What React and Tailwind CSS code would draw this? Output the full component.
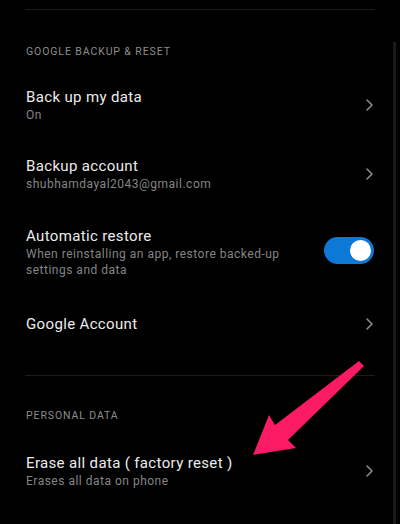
const Chevron = () => (
    <svg width="9" height="14" viewBox="0 0 9 14" fill="none" className="shrink-0">
        <path d="M2 2l5 5-5 5" stroke="#8a8a8a" strokeWidth="1.6" strokeLinecap="round" strokeLinejoin="round" />
    </svg>
);

const Row = ({ title, sub, className = '', right }) => (
    <div className={`flex items-center justify-between pl-[26px] pr-[26px] ${className}`}>
        <div className="flex flex-col">
            <span className="text-[15px] leading-[20px] tracking-[0.35px] text-[#ececec]">{title}</span>
            {sub && <span className="text-[12px] leading-[16px] text-[#858585] tracking-[0.5px]">{sub}</span>}
        </div>
        {right || <Chevron />}
    </div>
);

const App = () => {
    return (
        <div
            className="relative w-[400px] h-[524px] overflow-hidden bg-black pt-[9px]"
            style={{ fontFamily: 'Roboto, "Noto Sans", sans-serif' }}
        >
            <div className="mx-[25px] h-px bg-[#1c1c1c]" />

            <div className="mt-[35px] pl-[26px] text-[10.5px] leading-[14px] tracking-[0.9px] text-[#8d8d8d]">
                GOOGLE BACKUP &amp; RESET
            </div>

            <Row className="mt-[28px]" title="Back up my data" sub="On" />
            <Row className="mt-[33px]" title="Backup account" sub="shubhamdayal2043@gmail.com" />

            <div className="mt-[34px] flex items-start justify-between pl-[26px] pr-[26px]">
                <div className="flex flex-col">
                    <span className="text-[15px] leading-[20px] tracking-[0.35px] text-[#ececec]">Automatic restore</span>
                    <span className="text-[12px] leading-[16px] text-[#858585] tracking-[0.5px]">
                        When reinstalling an app, restore backed-up
                        <br />
                        settings and data
                    </span>
                </div>
                <div className="mt-[11px] flex h-[27px] w-[50px] shrink-0 items-center justify-end rounded-full bg-[#0d78d6] pr-[3px]">
                    <div className="h-[21px] w-[21px] rounded-full bg-white" />
                </div>
            </div>

            <Row className="mt-[36px]" title="Google Account" />

            <div className="mt-[41px] mx-[25px] h-px bg-[#1c1c1c]" />

            <div className="mt-[33px] pl-[26px] text-[10.5px] leading-[14px] tracking-[0.9px] text-[#8d8d8d]">
                PERSONAL DATA
            </div>

            <Row className="mt-[30px]" title="Erase all data ( factory reset )" sub="Erases all data on phone" />

            {/* scrollbar */}
            <div className="absolute right-[4px] top-[42px] bottom-0 w-[3px] bg-[#1a1a1a]" />

            {/* annotation arrow */}
            <svg className="absolute left-0 top-0" width="400" height="524" viewBox="0 0 400 524">
                <polygon
                    points="253,455 269,415 275,425 359,361 364,366 288,440 296,448"
                    fill="#fb1a64"
                    strokeLinejoin="round"
                />
            </svg>
        </div>
    );
};

export default App;
